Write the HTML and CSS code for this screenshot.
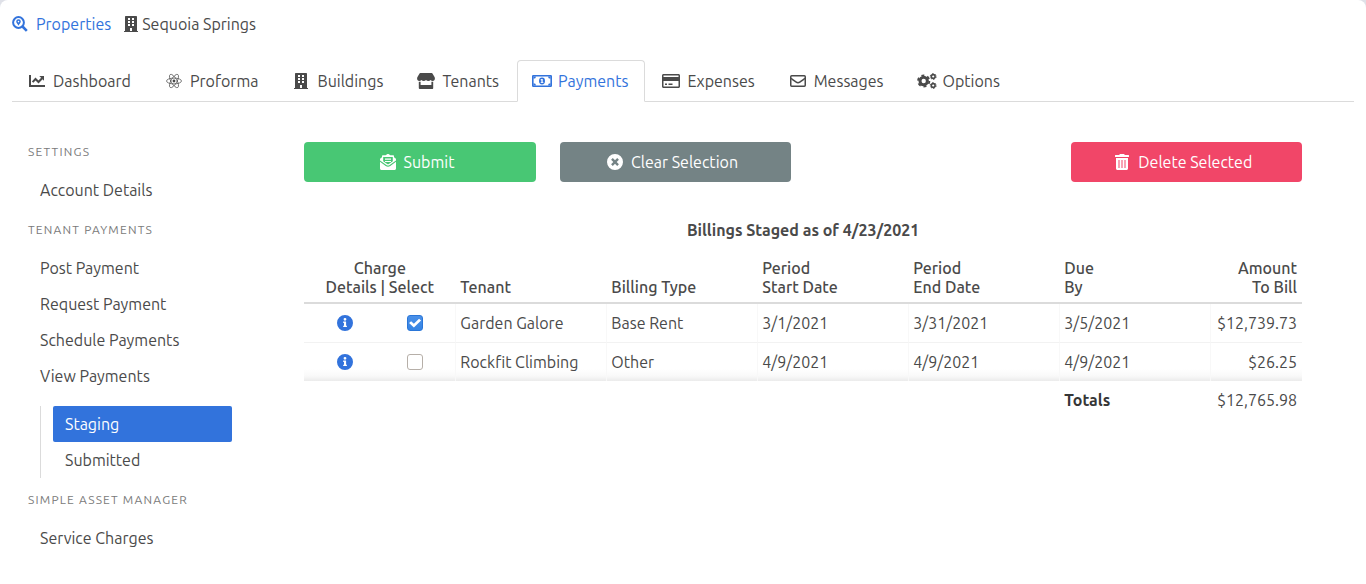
FILE: index.html
```html
<!DOCTYPE html>
<html lang="en">
<head>
<meta charset="utf-8">
<meta name="viewport" content="width=device-width, initial-scale=1">
<title>Sequoia Springs - Payments</title>
<link rel="stylesheet" href="styles.css">
</head>
<body>
<svg class="sprite" aria-hidden="true">
  <symbol id="i-search" viewBox="0 0 16 16"><circle cx="6.5" cy="6.5" r="5.4" fill="none" stroke="currentColor" stroke-width="2"/><path d="M10.5 10.5l4.3 4.3" stroke="currentColor" stroke-width="2.6"/><path fill-rule="evenodd" d="M6.5 3.2a2.3 2.3 0 0 1 2.3 2.3c0 1.6-1.5 2.6-2.3 4.2-.8-1.6-2.3-2.6-2.3-4.2a2.3 2.3 0 0 1 2.3-2.3zm0 1.6a.8.8 0 1 0 0 1.6.8.8 0 0 0 0-1.6z"/></symbol>
  <symbol id="i-building" viewBox="0 0 14 16"><path fill-rule="evenodd" d="M1.7 0h10.6c.4 0 .7.3.7.7V15h.6c.3 0 .4.2.4.4v.6H0v-.6c0-.2.1-.4.4-.4H1V.7c0-.4.3-.7.7-.7zM4 2v2h2V2zm4 0v2h2V2zM4 5v2h2V5zm4 0v2h2V5zM4 8v2h2V8zm4 0v2h2V8zM6 12v3h2v-3z"/></symbol>
  <symbol id="i-chart" viewBox="0 0 16 16"><path d="M1 2v11h15" fill="none" stroke="currentColor" stroke-width="2"/><path d="M3.6 9.2L6.5 6l3 3 3.6-3.8" fill="none" stroke="currentColor" stroke-width="2"/><path d="M10.3 3H15v4.8z"/></symbol>
  <symbol id="i-atom" viewBox="0 0 16 16"><g fill="none" stroke="currentColor" stroke-width=".7"><ellipse cx="8" cy="8" rx="7.5" ry="2.9"/><ellipse cx="8" cy="8" rx="7.5" ry="2.9" transform="rotate(60 8 8)"/><ellipse cx="8" cy="8" rx="7.5" ry="2.9" transform="rotate(120 8 8)"/></g><circle cx="8" cy="8" r="1.4"/></symbol>
  <symbol id="i-store" viewBox="0 0 18 16"><g transform="scale(.9 1)"><path d="M3.7 0h12.6c.4 0 .7.2.9.5L19.5 4c1 1.700 0 4-2 4-1 0-1.800-.4-2.400-1.100-.6.700-1.500 1.100-2.500 1.100S10.600 7.600 10 6.900C9.400 7.600 8.500 8 7.500 8S5.500 7.600 4.900 6.900C4.300 7.600 3.500 8 2.500 8c-2 0-3-2.300-2-4L2.800.5c.2-.3.500-.5.900-.5z"/><path d="M2 8.800h2V12h12V8.800h2V15c0 .6-.4 1-1 1H3c-.6 0-1-.4-1-1z"/></g></symbol>
  <symbol id="i-money" viewBox="0 0 20 12"><rect x=".8" y=".8" width="18.400" height="10.400" rx=".4" fill="none" stroke="currentColor" stroke-width="1.600"/><path d="M1.500 1.500h2.500a2.500 2.300 0 0 1-2.500 2.300zM18.500 1.500h-2.500a2.500 2.300 0 0 0 2.500 2.300zM1.500 10.500h2.500a2.500 2.300 0 0 0-2.500-2.300zM18.500 10.500h-2.500a2.500 2.300 0 0 1 2.500-2.300z"/><path fill-rule="evenodd" d="M10 2.600a3 3.400 0 1 1 0 6.800 3 3.400 0 0 1 0-6.800zM9.700 4l-1.100.5v.8h.8v1.900h-.7V8h2.700v-.8h-.7V4z"/></symbol>
  <symbol id="i-card" viewBox="0 0 18 14"><path fill-rule="evenodd" d="M1.500 0h15c.8 0 1.500.7 1.500 1.500v11c0 .8-.7 1.500-1.500 1.500h-15C.7 14 0 13.300 0 12.500v-11C0 .7.700 0 1.500 0zm0 1.500V3h15V1.500zm0 5.500v5.500h15V7zM3 9.500h2V11H3zm3.500 0h4V11h-4z"/></symbol>
  <symbol id="i-mail" viewBox="0 0 16 12"><rect x=".75" y=".75" width="14.500" height="10.500" rx=".9" fill="none" stroke="currentColor" stroke-width="1.500"/><path d="M1 3.200c2 1.700 3.700 2.900 5.200 4 1.400 1 2.200 1 3.600 0 1.500-1.100 3.200-2.300 5.200-4" fill="none" stroke="currentColor" stroke-width="1.500"/></symbol>
  <symbol id="i-cogs" viewBox="0 0 20 16"><g fill="none" stroke="currentColor"><circle cx="6.700" cy="8" r="3.700" stroke-width="3"/><circle cx="6.700" cy="8" r="5.700" stroke-width="1.800" stroke-dasharray="2.980 2.980"/><circle cx="16.200" cy="3.500" r="1.900" stroke-width="1.600"/><circle cx="16.200" cy="3.500" r="2.900" stroke-width="1" stroke-dasharray="1.520 1.520"/><circle cx="16.200" cy="12.500" r="1.900" stroke-width="1.600"/><circle cx="16.200" cy="12.500" r="2.900" stroke-width="1" stroke-dasharray="1.520 1.520"/></g></symbol>
  <symbol id="i-open" viewBox="0 0 16 16"><path d="M0 7.800l5.700 4.100c1.500 1.100 3.100 1.100 4.600 0L16 7.800v6.700c0 .8-.7 1.500-1.500 1.500h-13C.7 16 0 15.300 0 14.500z"/><path fill-rule="evenodd" d="M5.600 1.300C6.500.6 7.200 0 8 0s1.500.6 2.400 1.300H13c.6 0 1 .4 1 1v.9l1.400 1.100c.4.300.6.700.6 1.200v.9l-6.400 4.600c-1 .7-2.200.7-3.200 0L0 6.400v-.9c0-.5.200-.9.600-1.200L2 3.200v-.9c0-.6.400-1 1-1zM3.200 3v4.300l4 2.800c.5.300 1.100.3 1.600 0l4-2.800V3zM5 4.600h6v1.200H5zm0 2.300h6v1.200H5z"/></symbol>
  <symbol id="i-times" viewBox="0 0 16 16"><path fill-rule="evenodd" d="M8 0a8 8 0 1 1 0 16A8 8 0 0 1 8 0zM5.800 4.100L4.100 5.800 6.300 8l-2.200 2.200 1.700 1.700L8 9.700l2.200 2.200 1.700-1.700L9.700 8l2.200-2.200-1.700-1.700L8 6.300z"/></symbol>
  <symbol id="i-trash" viewBox="0 0 14 16"><path d="M.5 1h3.700l.5-.7c.1-.2.300-.3.500-.3h3.600c.2 0 .4.100.5.300l.5.700h3.700c.3 0 .5.200.5.500V3H0V1.500C0 1.200.2 1 .5 1z"/><path fill-rule="evenodd" d="M1 4h12v10.500c0 .8-.7 1.500-1.500 1.500h-9c-.8 0-1.500-.7-1.500-1.500zM3.500 6v8h1V6zm3 0v8h1V6zm3 0v8h1V6z"/></symbol>
  <symbol id="i-info" viewBox="0 0 16 16"><path fill-rule="evenodd" d="M8 0a8 8 0 1 1 0 16A8 8 0 0 1 8 0zM8 2.900a1.400 1.400 0 1 0 0 2.800 1.400 1.400 0 0 0 0-2.800zM6.200 6.600V8h.8v2.700h-.8v1.400h3.700v-1.400h-.8V6.600z"/></symbol>
</svg>
<div class="page">
  <nav class="breadcrumb" aria-label="Breadcrumb">
    <a class="crumb" href="#"><svg class="icon w16"><use href="#i-search"/></svg>Properties</a>
    <span class="crumb current"><svg class="icon w14"><use href="#i-building"/></svg>Sequoia Springs</span>
  </nav>
  <nav class="tabs" aria-label="Property sections">
    <a class="tab" href="#"><span class="slot"><svg class="icon w16"><use href="#i-chart"/></svg></span>Dashboard</a>
    <a class="tab" href="#"><span class="slot"><svg class="icon w16"><use href="#i-atom"/></svg></span>Proforma</a>
    <a class="tab" href="#"><span class="slot"><svg class="icon w14"><use href="#i-building"/></svg></span>Buildings</a>
    <a class="tab" href="#"><span class="slot"><svg class="icon w18"><use href="#i-store"/></svg></span>Tenants</a>
    <a class="tab active" href="#" aria-current="page"><span class="slot"><svg class="icon w20"><use href="#i-money"/></svg></span>Payments</a>
    <a class="tab" href="#"><span class="slot"><svg class="icon w18"><use href="#i-card"/></svg></span>Expenses</a>
    <a class="tab" href="#"><span class="slot"><svg class="icon w16"><use href="#i-mail"/></svg></span>Messages</a>
    <a class="tab" href="#"><span class="slot"><svg class="icon w20"><use href="#i-cogs"/></svg></span>Options</a>
  </nav>
  <div class="layout">
    <aside class="menu">
      <p class="menu-label">Settings</p>
      <ul class="menu-list"><li><a href="#">Account Details</a></li></ul>
      <p class="menu-label">Tenant Payments</p>
      <ul class="menu-list">
        <li><a href="#">Post Payment</a></li>
        <li><a href="#">Request Payment</a></li>
        <li><a href="#">Schedule Payments</a></li>
        <li><a href="#">View Payments</a>
          <ul class="submenu">
            <li><a class="selected" href="#">Staging</a></li>
            <li><a href="#">Submitted</a></li>
          </ul>
        </li>
      </ul>
      <p class="menu-label">Simple Asset Manager</p>
      <ul class="menu-list"><li><a href="#">Service Charges</a></li></ul>
    </aside>
    <main>
      <div class="actions">
        <button class="button submit" type="button"><svg class="icon w16"><use href="#i-open"/></svg>Submit</button>
        <button class="button clear" type="button"><svg class="icon w16"><use href="#i-times"/></svg>Clear Selection</button>
        <button class="button delete" type="button"><svg class="icon w16"><use href="#i-trash"/></svg>Delete Selected</button>
      </div>
      <table class="billings">
        <caption>Billings Staged as of 4/23/2021</caption>
        <colgroup><col span="6" class="wide"><col></colgroup>
        <thead>
          <tr><th class="center" scope="col">Charge<br>Details | Select</th><th scope="col">Tenant</th><th scope="col">Billing Type</th><th scope="col">Period<br>Start Date</th><th scope="col">Period<br>End Date</th><th scope="col">Due<br>By</th><th class="amount" scope="col">Amount<br>To Bill</th></tr>
        </thead>
        <tbody>
          <tr><td><div class="pick"><button class="info" type="button" aria-label="Details for Garden Galore"><svg class="icon w16"><use href="#i-info"/></svg></button><input type="checkbox" aria-label="Select Garden Galore" checked></div></td><td>Garden Galore</td><td>Base Rent</td><td>3/1/2021</td><td>3/31/2021</td><td>3/5/2021</td><td class="amount">$12,739.73</td></tr>
          <tr><td><div class="pick"><button class="info" type="button" aria-label="Details for Rockfit Climbing"><svg class="icon w16"><use href="#i-info"/></svg></button><input type="checkbox" aria-label="Select Rockfit Climbing"></div></td><td>Rockfit Climbing</td><td>Other</td><td>4/9/2021</td><td>4/9/2021</td><td>4/9/2021</td><td class="amount">$26.25</td></tr>
        </tbody>
        <tfoot>
          <tr><td colspan="5"></td><th scope="row">Totals</th><td class="amount">$12,765.98</td></tr>
        </tfoot>
      </table>
    </main>
  </div>
</div>
</body>
</html>
```
FILE: styles.css
```css
* { box-sizing: border-box; }

body {
  margin: 0;
  background: #dfe1e8;
  color: #4a4a4a;
  font-family: Ubuntu, "Noto Sans", "Open Sans", sans-serif;
  font-size: 16px;
  line-height: 24px;
}

a { color: inherit; text-decoration: none; }
button, input { font: inherit; margin: 0; }
ul { list-style: none; margin: 0; padding: 0; }

.sprite { position: absolute; width: 0; height: 0; }
.icon { height: 16px; flex: none; fill: currentColor; }
.w14 { width: 14px; }
.w16 { width: 16px; }
.w18 { width: 18px; }
.w20 { width: 20px; }

.page {
  min-height: 100vh;
  padding: 12px 12px 28px;
  background: #fff;
  border-radius: 8px 8px 0 0;
}

.breadcrumb { display: flex; gap: 13px; }
.crumb { display: flex; align-items: center; gap: 8px; color: #3273dc; }
.crumb.current { gap: 4px; color: #4a4a4a; }

.tabs {
  display: flex;
  gap: 1px;
  margin-top: 24px;
  border-bottom: 1px solid #dbdbdb;
  white-space: nowrap;
}
.tab {
  display: flex;
  align-items: center;
  gap: 8px;
  margin-bottom: -1px;
  padding: 8px 16px;
  border: 1px solid transparent;
  border-radius: 4px 4px 0 0;
}
.tab.active { color: #3273dc; background: #fff; border-color: #dbdbdb; border-bottom-color: #fff; }
.slot { display: flex; justify-content: center; width: 16px; }

.layout {
  display: grid;
  grid-template-columns: 17fr 83fr;
  gap: 72px;
  padding: 40px 52px 0 16px;
}

.menu-label {
  margin: 13px 0 11px;
  color: #7a7a7a;
  font-size: 12px;
  line-height: 18px;
  letter-spacing: 0.1em;
  text-transform: uppercase;
  white-space: nowrap;
}
.menu-label:first-child { margin-top: 1px; }
.menu-list a { display: block; padding: 6px 12px; border-radius: 2px; }
.submenu { margin: 12px 0 0 12px; padding-left: 12px; border-left: 1px solid #dbdbdb; }
.menu-list .selected { background: #3273dc; color: #fff; }

.actions { display: grid; grid-template-columns: repeat(4, 1fr); gap: 24px; }
.button {
  display: flex;
  align-items: center;
  justify-content: center;
  gap: 8px;
  height: 40px;
  padding: 0 22px 0 16px;
  border: 0;
  border-radius: 4px;
  color: #fff;
  white-space: nowrap;
}
.submit { background: #48c774; }
.clear { background: #748385; }
.delete { grid-column: 4; background: #f14668; }

.billings { width: 100%; margin-top: 36px; table-layout: fixed; border-collapse: separate; border-spacing: 0; }
.billings caption { padding-bottom: 12px; font-weight: 700; }
.wide { width: 151px; }
.billings th, .billings td { padding: 7px 5px; text-align: left; white-space: nowrap; }
.billings thead th {
  padding: 5px;
  border-bottom: 2px solid #dbdbdb;
  font-weight: 500;
  line-height: 19px;
  vertical-align: bottom;
}
.billings tbody td { border-bottom: 1px solid #f2f2f2; }
.billings tbody td + td { padding-left: 4px; border-left: 1px solid #f8f8f8; }
.billings tbody tr:last-child td {
  border-bottom: 0;
  background: linear-gradient(to top, #ebebeb, #f9f9f9 5px, #fff 12px);
}
.billings tfoot th { color: #363636; font-weight: 700; }
.billings .center { text-align: center; }
.billings .amount { text-align: right; }

.pick { display: grid; grid-template-columns: 1fr 1fr; place-items: center; height: 24px; }
.info { display: flex; padding: 0; border: 0; background: none; color: #3273dc; }
.pick input {
  display: grid;
  place-items: center;
  width: 16px;
  height: 16px;
  appearance: none;
  border: 1px solid #b6afa8;
  border-radius: 3px;
  background: #fff;
}
.pick input:checked { border-color: #2a76d8; background: linear-gradient(#4a90e8, #3584e4); }
.pick input:checked::before {
  content: "";
  width: 12px;
  height: 10px;
  background: #fff;
  clip-path: polygon(0 50%, 17% 32%, 40% 58%, 83% 8%, 100% 26%, 40% 95%);
}
```
